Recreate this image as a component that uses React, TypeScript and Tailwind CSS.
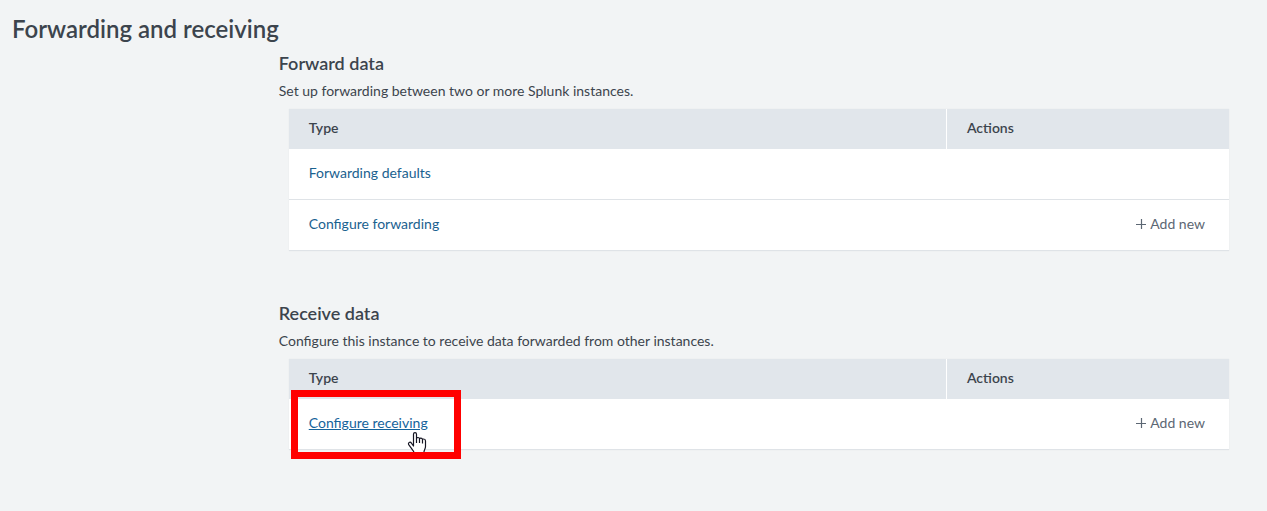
type Row = { label: string; canAdd?: boolean; highlighted?: boolean };

type SectionProps = { title: string; description: string; rows: Row[] };

function PlusIcon() {
  return (
    <svg aria-hidden="true" width="10" height="10" viewBox="0 0 10 10" stroke="currentColor" strokeWidth="1.2">
      <path d="M5.5 0v10M0 5.500h10" />
    </svg>
  );
}

function HandCursor() {
  return (
    <svg aria-hidden="true" width="20" height="24" viewBox="0 0 20 24">
      <path
        d="M6.500 14V2.300C6.500 1.100 7.100.6 8 .6s1.500.5 1.500 1.700V6.500c.2-.7.8-1 1.500-1 .9 0 1.400.5 1.500 1.300.3-.5.8-.7 1.400-.7.9 0 1.500.6 1.600 1.400.3-.4.7-.5 1.200-.5 1.100 0 1.800.7 1.800 1.900v5.600c0 2.500-1.500 3.300-1.500 5.300v3H7v-2c0-1.500-1-2.300-2-3.700l-3.100-4.200c-.7-1-.5-2 .3-2.500.9-.5 1.800 0 2.400.9z"
        fill="#fff"
        stroke="#151522"
        strokeWidth="1.200"
        strokeLinejoin="round"
      />
      <path d="M9.500 6.500v4.500M12.500 7v4M15.500 7.500v4" fill="none" stroke="#151522" strokeWidth="1.200" />
    </svg>
  );
}

function HighlightFrame() {
  return (
    <div className="pointer-events-none absolute -left-[18px] -top-[23px] h-[69px] w-[170px] overflow-hidden border-[7px] border-[#ff0000]">
      <div className="absolute left-[109px] top-[35px]">
        <HandCursor />
      </div>
    </div>
  );
}

function Section({ title, description, rows }: SectionProps) {
  return (
    <section>
      <h2 className="text-[18px] font-semibold leading-6">{title}</h2>
      <p className="mt-1.5 leading-5">{description}</p>
      <table className="ml-[10px] mt-2 w-[calc(100%-10px)] table-fixed border-separate border-spacing-0 bg-white text-left shadow-[0_0_1px_rgba(0,0,0,0.08)]">
        <thead className="bg-[#e1e6eb]">
          <tr className="h-10">
            <th className="w-7/10 border-r border-white px-5 pb-0.5 font-semibold">Type</th>
            <th className="px-5 pb-0.5 font-semibold">Actions</th>
          </tr>
        </thead>
        <tbody>
          {rows.map((row) => (
            <tr key={row.label} className="h-[51px]">
              <td className="border-b border-[#dfe3e7] px-5 pb-0.5">
                <span className="relative inline-block">
                  <a href="#" className={row.highlighted ? "text-[#15639b] underline" : "text-[#1a618f]"}>
                    {row.label}
                  </a>
                  {row.highlighted && <HighlightFrame />}
                </span>
              </td>
              <td className="border-b border-[#dfe3e7] pb-0.5 pl-5 pr-6 text-right">
                {row.canAdd && (
                  <a href="#" className="inline-flex items-center gap-1 text-[#5c6773]">
                    <PlusIcon />
                    Add new
                  </a>
                )}
              </td>
            </tr>
          ))}
        </tbody>
      </table>
    </section>
  );
}

export default function App() {
  return (
    <div className="min-h-screen bg-[#f2f4f5] pt-[14px] font-['Lato',sans-serif] text-[14px] leading-5 text-[#3c444d]">
      <h1 className="pl-3 text-[24px] font-semibold leading-[30px]">Forwarding and receiving</h1>
      <main className="ml-[22%] mr-[38px] mt-[7px] flex flex-col gap-[50px]">
        <Section
          title="Forward data"
          description="Set up forwarding between two or more Splunk instances."
          rows={[{ label: "Forwarding defaults" }, { label: "Configure forwarding", canAdd: true }]}
        />
        <Section
          title="Receive data"
          description="Configure this instance to receive data forwarded from other instances."
          rows={[{ label: "Configure receiving", canAdd: true, highlighted: true }]}
        />
      </main>
    </div>
  );
}
